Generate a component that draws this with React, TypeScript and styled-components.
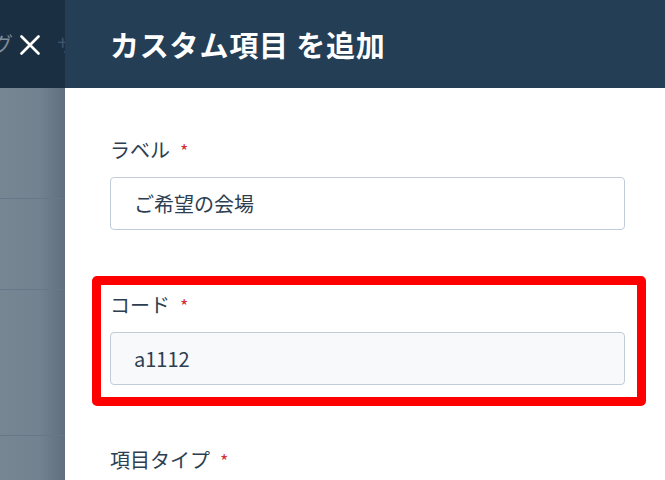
import styled, { createGlobalStyle } from "styled-components";

const GlobalStyle = createGlobalStyle`
  html, body {
    margin: 0;
    padding: 0;
    background: #ffffff;
    font-family: "Noto Sans CJK JP", "Noto Sans", sans-serif;
  }
`;

const CloseIcon = () => (
  <svg width="20" height="20" viewBox="0 0 20 20">
    <path d="M1.5 1.5 L18.5 18.5 M18.5 1.5 L1.5 18.5" stroke="#ffffff" strokeWidth="2.6" strokeLinecap="round" />
  </svg>
);

const App = () => {
  return (
    <>
      <GlobalStyle />
      <Page>
        <Backdrop>
          <BackdropHeader>
            <Crumb>グ</Crumb>
            <CloseButton>
              <CloseIcon />
            </CloseButton>
            <NextCrumb>サ</NextCrumb>
          </BackdropHeader>
          <BackdropRow height={111} />
          <BackdropRow height={91} />
          <BackdropRow height={146} />
          <BackdropRow height={44} last />
        </Backdrop>
        <Panel>
          <PanelHeader>
            <Title>カスタム項目 を追加</Title>
          </PanelHeader>
          <Form>
            <Field>
              <Label>
                ラベル<Required>*</Required>
              </Label>
              <Input defaultValue="ご希望の会場" />
            </Field>
            <Field highlighted>
              <Label>
                コード<Required>*</Required>
              </Label>
              <Input filled defaultValue="a1112" />
            </Field>
            <Field>
              <Label>
                項目タイプ<Required>*</Required>
              </Label>
            </Field>
          </Form>
        </Panel>
      </Page>
    </>
  );
};

const Page = styled.div`
  display: flex;
  width: 665px;
  height: 480px;
  overflow: hidden;
`;

const Backdrop = styled.div`
  width: 65px;
  flex-shrink: 0;
  display: flex;
  flex-direction: column;
  background: linear-gradient(90deg, #778693 0%, #728290 60%, #5f6f7d 100%);
`;

const BackdropHeader = styled.div`
  height: 88px;
  flex-shrink: 0;
  display: flex;
  align-items: center;
  background: #1b2f43;
  overflow: hidden;
  white-space: nowrap;
`;

const Crumb = styled.span`
  margin-left: -7px;
  font-size: 20px;
  color: #7f8d9b;
  line-height: 1;
`;

const CloseButton = styled.span`
  display: flex;
  margin-left: 7px;
  margin-top: 1px;
`;

const NextCrumb = styled.span`
  margin-left: 17px;
  font-size: 18px;
  color: #40546a;
  line-height: 1;
`;

const BackdropRow = styled.div<{ height: number; last?: boolean }>`
  height: ${(p) => p.height}px;
  flex-shrink: 0;
  border-bottom: ${(p) => (p.last ? "none" : "1px solid #66778a")};
  box-sizing: border-box;
`;

const Panel = styled.div`
  flex: 1;
  display: flex;
  flex-direction: column;
  background: #ffffff;
`;

const PanelHeader = styled.div`
  height: 88px;
  flex-shrink: 0;
  display: flex;
  align-items: center;
  padding-left: 45px;
  background: #243e56;
`;

const Title = styled.h1`
  margin: 0;
  font-size: 29px;
  font-weight: 700;
  color: #ffffff;
  letter-spacing: 0.8px;
  line-height: 1;
`;

const Form = styled.div`
  display: flex;
  flex-direction: column;
  padding: 47px 0 0 45px;
  width: 515px;
`;

const Field = styled.div<{ highlighted?: boolean }>`
  position: relative;
  display: flex;
  flex-direction: column;
  gap: 12px;
  margin-bottom: 60px;

  &::after {
    content: "";
    display: ${(p) => (p.highlighted ? "block" : "none")};
    position: absolute;
    left: -18px;
    right: -21px;
    top: -14px;
    bottom: -21px;
    border: 9px solid #ff0000;
    border-radius: 5px;
    pointer-events: none;
  }
`;

const Label = styled.label`
  font-size: 20px;
  line-height: 30px;
  color: #2c3e50;
`;

const Required = styled.span`
  margin-left: 10px;
  color: #d0313a;
  font-size: 18px;
`;

const Input = styled.input<{ filled?: boolean }>`
  box-sizing: border-box;
  width: 515px;
  height: 53px;
  padding: 0 23px;
  border: 1px solid #c0cdd8;
  border-radius: 4px;
  background: ${(p) => (p.filled ? "#f7f9fb" : "#ffffff")};
  font-family: "Noto Sans CJK JP", "Noto Sans", sans-serif;
  font-size: 20px;
  color: #2c3e50;
  outline: none;
`;

export default App;
